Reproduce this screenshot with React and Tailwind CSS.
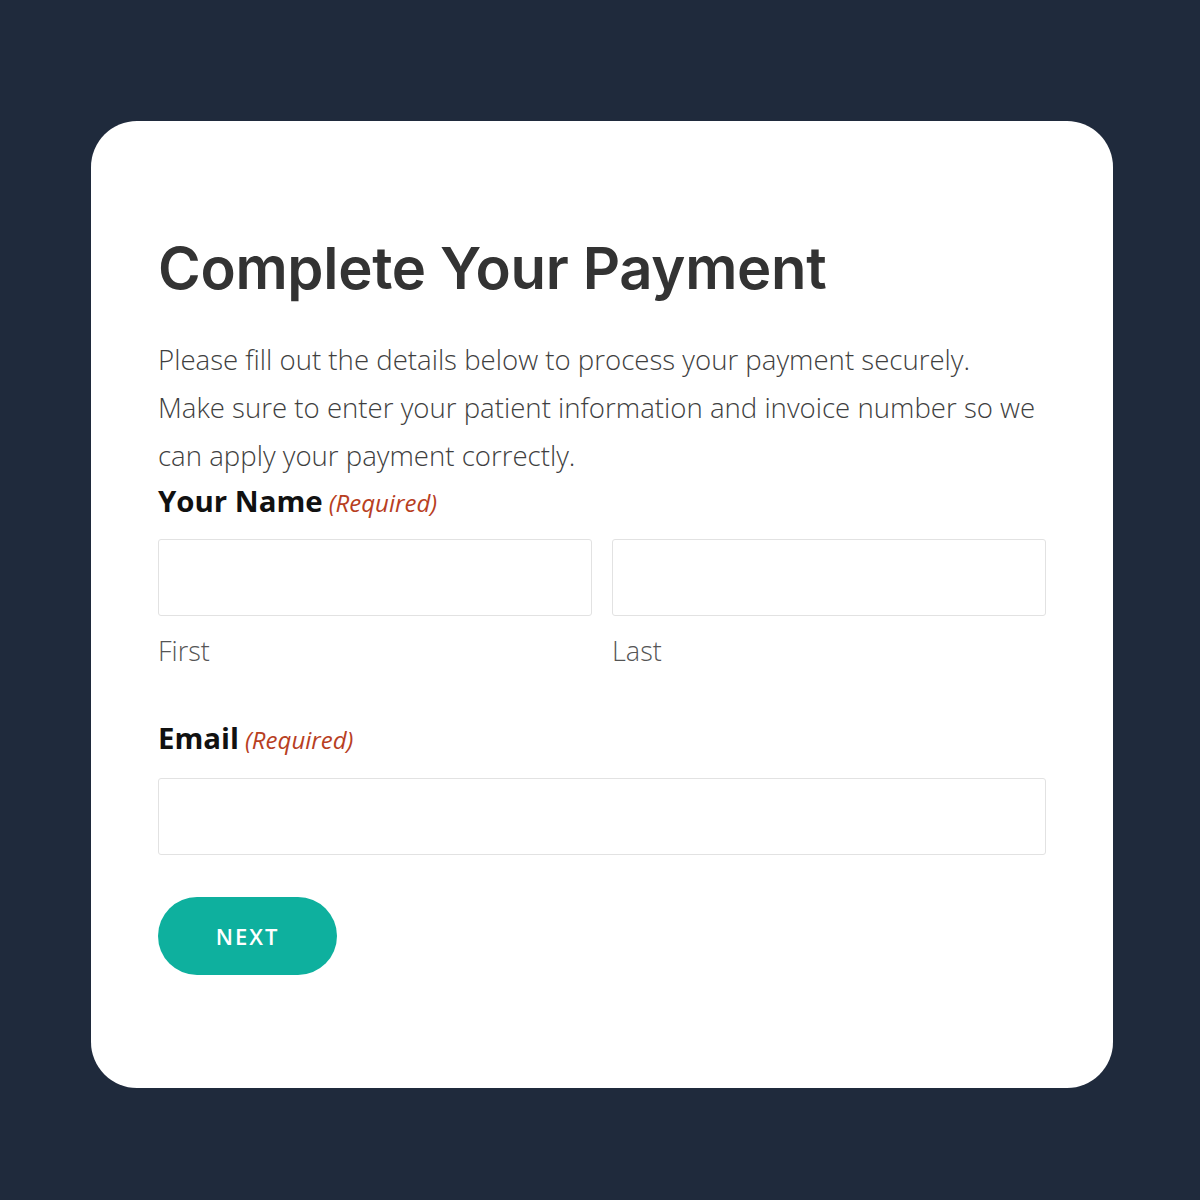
import React from "react";

export default function App() {
  return (
    <div className="min-h-[1200px] w-[1200px] bg-[#1f2a3c] pt-[121px] pl-[91px]">
      <div className="w-[1022px] h-[967px] bg-white rounded-[46px] px-[67px] pt-[112px]">
        <h1 className="font-['Inter',sans-serif] font-semibold text-[58px] leading-[70px] text-[#333333] tracking-[-0.3px]">
          Complete Your Payment
        </h1>

        <p className="mt-[32px] font-['Open_Sans',sans-serif] font-light text-[27.6px] leading-[48px] text-[#3f3f3f]">
          Please fill out the details below to process your payment securely.
          <br />
          Make sure to enter your patient information and invoice number so we
          can apply your payment correctly.
        </p>

        <div className="font-['Open_Sans',sans-serif]">
          <div className="mt-[2px] flex items-baseline gap-[6px] leading-[40px]">
            <span className="text-[29.4px] font-bold text-[#111111]">Your Name</span>
            <span className="text-[24px] italic text-[#b8401f]">(Required)</span>
          </div>

          <div className="mt-[16px] grid grid-cols-2 gap-[20px]">
            <div>
              <input
                type="text"
                className="block w-full h-[77px] border border-[#e2e2e2] rounded-[3px] bg-white"
              />
              <div className="mt-[17px] text-[27px] font-light text-[#555555] leading-[36px]">
                First
              </div>
            </div>
            <div>
              <input
                type="text"
                className="block w-full h-[77px] border border-[#e2e2e2] rounded-[3px] bg-white"
              />
              <div className="mt-[17px] text-[27px] font-light text-[#555555] leading-[36px]">
                Last
              </div>
            </div>
          </div>

          <div className="mt-[49px] flex items-baseline gap-[6px] leading-[40px]">
            <span className="text-[29.4px] font-bold text-[#111111]">Email</span>
            <span className="text-[24px] italic text-[#b8401f]">(Required)</span>
          </div>

          <input
            type="email"
            className="mt-[18px] block w-full h-[77px] border border-[#e2e2e2] rounded-[3px] bg-white"
          />

          <button className="mt-[42px] w-[179px] h-[78px] rounded-full bg-[#0eb09e] text-white text-[22px] font-semibold tracking-[2px]">
            NEXT
          </button>
        </div>
      </div>
    </div>
  );
}
